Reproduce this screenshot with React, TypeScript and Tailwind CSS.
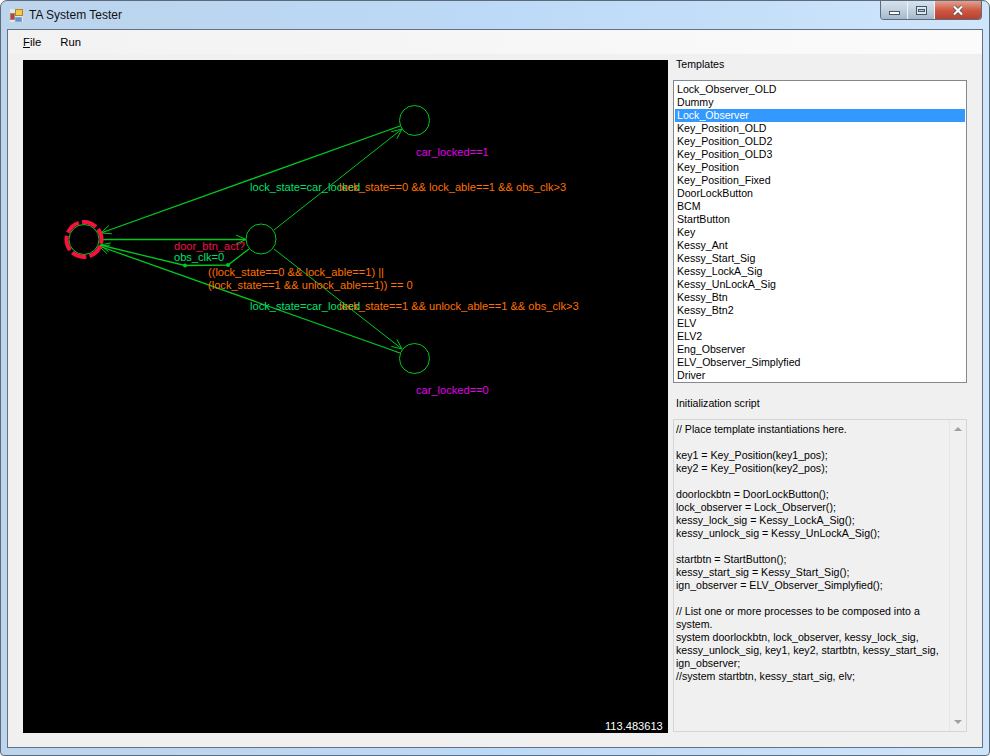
import React from "react";

const templates = ["Lock_Observer_OLD","Dummy","Lock_Observer","Key_Position_OLD","Key_Position_OLD2","Key_Position_OLD3","Key_Position","Key_Position_Fixed","DoorLockButton","BCM","StartButton","Key","Kessy_Ant","Kessy_Start_Sig","Kessy_LockA_Sig","Kessy_UnLockA_Sig","Kessy_Btn","Kessy_Btn2","ELV","ELV2","Eng_Observer","ELV_Observer_Simplyfied","Driver"];

const script = `// Place template instantiations here.

key1 = Key_Position(key1_pos);
key2 = Key_Position(key2_pos);

doorlockbtn = DoorLockButton();
lock_observer = Lock_Observer();
kessy_lock_sig = Kessy_LockA_Sig();
kessy_unlock_sig = Kessy_UnLockA_Sig();

startbtn = StartButton();
kessy_start_sig = Kessy_Start_Sig();
ign_observer = ELV_Observer_Simplyfied();

// List one or more processes to be composed into a
system.
system doorlockbtn, lock_observer, kessy_lock_sig,
kessy_unlock_sig, key1, key2, startbtn, kessy_start_sig,
ign_observer;
//system startbtn, kessy_start_sig, elv;`;

const GREEN = "#00c81e";

function Arrow({ x, y, fx, fy }: { x: number; y: number; fx: number; fy: number }) {
  const a = Math.atan2(y - fy, x - fx);
  const l = 11;
  const s = 0.42;
  const p1 = [x - l * Math.cos(a - s), y - l * Math.sin(a - s)];
  const p2 = [x - l * Math.cos(a + s), y - l * Math.sin(a + s)];
  return <polyline points={`${p1[0]},${p1[1]} ${x},${y} ${p2[0]},${p2[1]}`} fill="none" stroke={GREEN} strokeWidth="1" />;
}

function Graph() {
  return (
    <svg width="645" height="673" viewBox="23 60 645 673" className="block font-['Liberation_Sans',sans-serif]">
      <rect x="23" y="60" width="645" height="673" fill="#000" />
      <g fill="none" stroke={GREEN} strokeWidth="1">
        <circle cx="84" cy="239.500" r="15" />
        <circle cx="261" cy="239" r="15" />
        <circle cx="414.500" cy="120.500" r="15" />
        <circle cx="414.500" cy="358.500" r="15" />
        <line x1="400" y1="126" x2="101" y2="233" strokeWidth="1.3" />
        <line x1="274" y1="230" x2="402" y2="129" />
        <line x1="103" y1="239.500" x2="246" y2="239.500" strokeWidth="1.3" />
        <polyline points="249,249 228,265 185,265.500 100,245" strokeWidth="1.3" />
        <line x1="274" y1="249" x2="402" y2="349" />
        <line x1="400" y1="353" x2="99" y2="246" strokeWidth="1.3" />
      </g>
      <Arrow x={101} y={233} fx={400} fy={126} />
      <Arrow x={402} y={129} fx={274} fy={230} />
      <Arrow x={246} y={239.5} fx={103} fy={239.5} />
      <Arrow x={100} y={245} fx={185} fy={265} />
      <Arrow x={402} y={349} fx={274} fy={249} />
      <Arrow x={99} y={246} fx={400} fy={353} />
      <circle cx="185" cy="265.500" r="2" fill={GREEN} />
      <circle cx="228" cy="265" r="2" fill={GREEN} />
      <circle cx="84" cy="239.500" r="17.500" fill="none" stroke="#f8103f" strokeWidth="4" strokeDasharray="15 3.330" transform="rotate(22 84 239.5)" />
      <g fontSize="11.100">
        <text x="416" y="156" fill="#e000e8">car_locked==1</text>
        <text x="416" y="394" fill="#e000e8">car_locked==0</text>
        <text x="250" y="191" fill="#00e070">lock_state=car_locked</text>
        <text x="339" y="191" fill="#ff7000">lock_state==0 &amp;&amp; lock_able==1 &amp;&amp; obs_clk&gt;3</text>
        <text x="174" y="250" fill="#f0104c">door_btn_act?</text>
        <text x="174" y="261" fill="#00e070">obs_clk=0</text>
        <text x="208" y="276" fill="#ff7000">((lock_state==0 &amp;&amp; lock_able==1) ||</text>
        <text x="208" y="289" fill="#ff7000">(lock_state==1 &amp;&amp; unlock_able==1)) == 0</text>
        <text x="250" y="310" fill="#00e070">lock_state=car_locked</text>
        <text x="339" y="310" fill="#ff7000">lock_state==1 &amp;&amp; unlock_able==1 &amp;&amp; obs_clk&gt;3</text>
        <text x="605" y="730" fill="#ffffff">113.483613</text>
      </g>
    </svg>
  );
}

function AppIcon() {
  return (
    <svg width="15" height="15" viewBox="0 0 15 15" className="shrink-0">
      <rect x="0" y="0" width="15" height="15" fill="#c9d2da" />
      <rect x="1" y="1" width="13" height="13" fill="#dfe6ec" />
      <rect x="1.500" y="5.500" width="4" height="6" fill="#d8352a" stroke="#8d8d8d" strokeWidth="1" />
      <rect x="6.500" y="1.500" width="7" height="6" fill="#f6c944" stroke="#a88a2a" strokeWidth="1" />
      <rect x="6.500" y="9.500" width="6" height="4" fill="#5d93d8" stroke="#8ba8c8" strokeWidth="1" />
    </svg>
  );
}

function WindowButtons() {
  return (
    <div className="flex h-[19px] mr-[7px] border border-t-0 border-[#5f6b7a] rounded-b-[4px] overflow-hidden">
      <div className="w-[27px] border-r border-[#eef3f8] flex items-end justify-center pb-[4px] bg-gradient-to-b from-[#d6e2ee] via-[#c2d1e0] to-[#a3b8cd]">
        <div className="w-[11px] h-[4px] bg-white border border-[#4a5564]"></div>
      </div>
      <div className="w-[27px] border-r border-[#eef3f8] flex items-center justify-center bg-gradient-to-b from-[#d6e2ee] via-[#c2d1e0] to-[#a3b8cd]">
        <div className="w-[11px] h-[9px] border border-[#4a5564] bg-[#dfe7ee] flex items-center justify-center">
          <div className="w-[7px] h-[3px] bg-[#b8c6d4] border border-[#4a5564]"></div>
        </div>
      </div>
      <div className="w-[46px] flex items-center justify-center bg-gradient-to-b from-[#e3a08f] via-[#cf5a44] to-[#b8402e]">
        <svg width="12" height="11" viewBox="0 0 12 11">
          <path d="M2 1.500 L10 9.500 M10 1.500 L2 9.500" stroke="#4a4f58" strokeWidth="3.600" />
          <path d="M2 1.500 L10 9.500 M10 1.500 L2 9.500" stroke="#ffffff" strokeWidth="2.200" />
        </svg>
      </div>
    </div>
  );
}

export default function App() {
  return (
    <div className="w-[990px] h-[756px] overflow-hidden bg-white font-['Liberation_Sans',sans-serif] text-[10.6px] leading-[13px] text-black">
      <div className="w-[990px] h-[756px] flex flex-col rounded-t-[7px] rounded-b-[4px] border border-[#5d6a7a] bg-gradient-to-r from-[#bcd4ec] via-[#bcd9f7] to-[#cfe5fb]">
        <div className="h-[28px] shrink-0 flex justify-between items-start">
          <div className="flex items-center gap-[5px] pl-[8px] pt-[6px]">
            <AppIcon />
            <span className="text-[12px] leading-[17px] text-[#111]">TA System Tester</span>
          </div>
          <WindowButtons />
        </div>
        <div className="flex-1 mx-[6px] mb-[7px] flex flex-col border border-[#667080] bg-[#f0f0f0] min-h-0">
          <div className="h-[24px] shrink-0 flex items-center gap-[19px] pl-[15px] text-[11.3px] bg-gradient-to-r from-[#f2f2f2] to-[#fbfbfb]">
            <span><span className="underline">F</span>ile</span>
            <span>Run</span>
          </div>
          <div className="flex-1 flex pl-[15px] pt-[6px] min-h-0">
            <div className="w-[645px] h-[673px] shrink-0">
              <Graph />
            </div>
            <div className="w-[294px] ml-[5px] flex flex-col">
              <div className="h-[20px] pl-[3px] leading-[9px]">Templates</div>
              <div className="h-[303px] border border-[#828790] bg-white pt-[2px] px-[1px] overflow-hidden">
                {templates.map((t) =>
                  t === "Lock_Observer" ? (
                    <div key={t} className="h-[13px] pl-[2px] bg-[#3399ff] text-white">{t}</div>
                  ) : (
                    <div key={t} className="h-[13px] pl-[2px]">{t}</div>
                  )
                )}
              </div>
              <div className="h-[36px] pl-[3px] pt-[14px]">Initialization script</div>
              <div className="h-[313px] flex border border-[#d5d5d5] bg-[#f0f0f0]">
                <div className="flex-1 pl-[2px] pt-[3px] whitespace-pre">{script}</div>
                <div className="w-[17px] border-l border-[#e6e6e6] bg-[#f0f0f0] flex flex-col justify-between items-center py-[7px]">
                  <div className="w-0 h-0 border-x-[4px] border-x-transparent border-b-[4px] border-b-[#a0a0a0]"></div>
                  <div className="w-0 h-0 border-x-[4px] border-x-transparent border-t-[4px] border-t-[#a0a0a0]"></div>
                </div>
              </div>
            </div>
          </div>
        </div>
      </div>
    </div>
  );
}
